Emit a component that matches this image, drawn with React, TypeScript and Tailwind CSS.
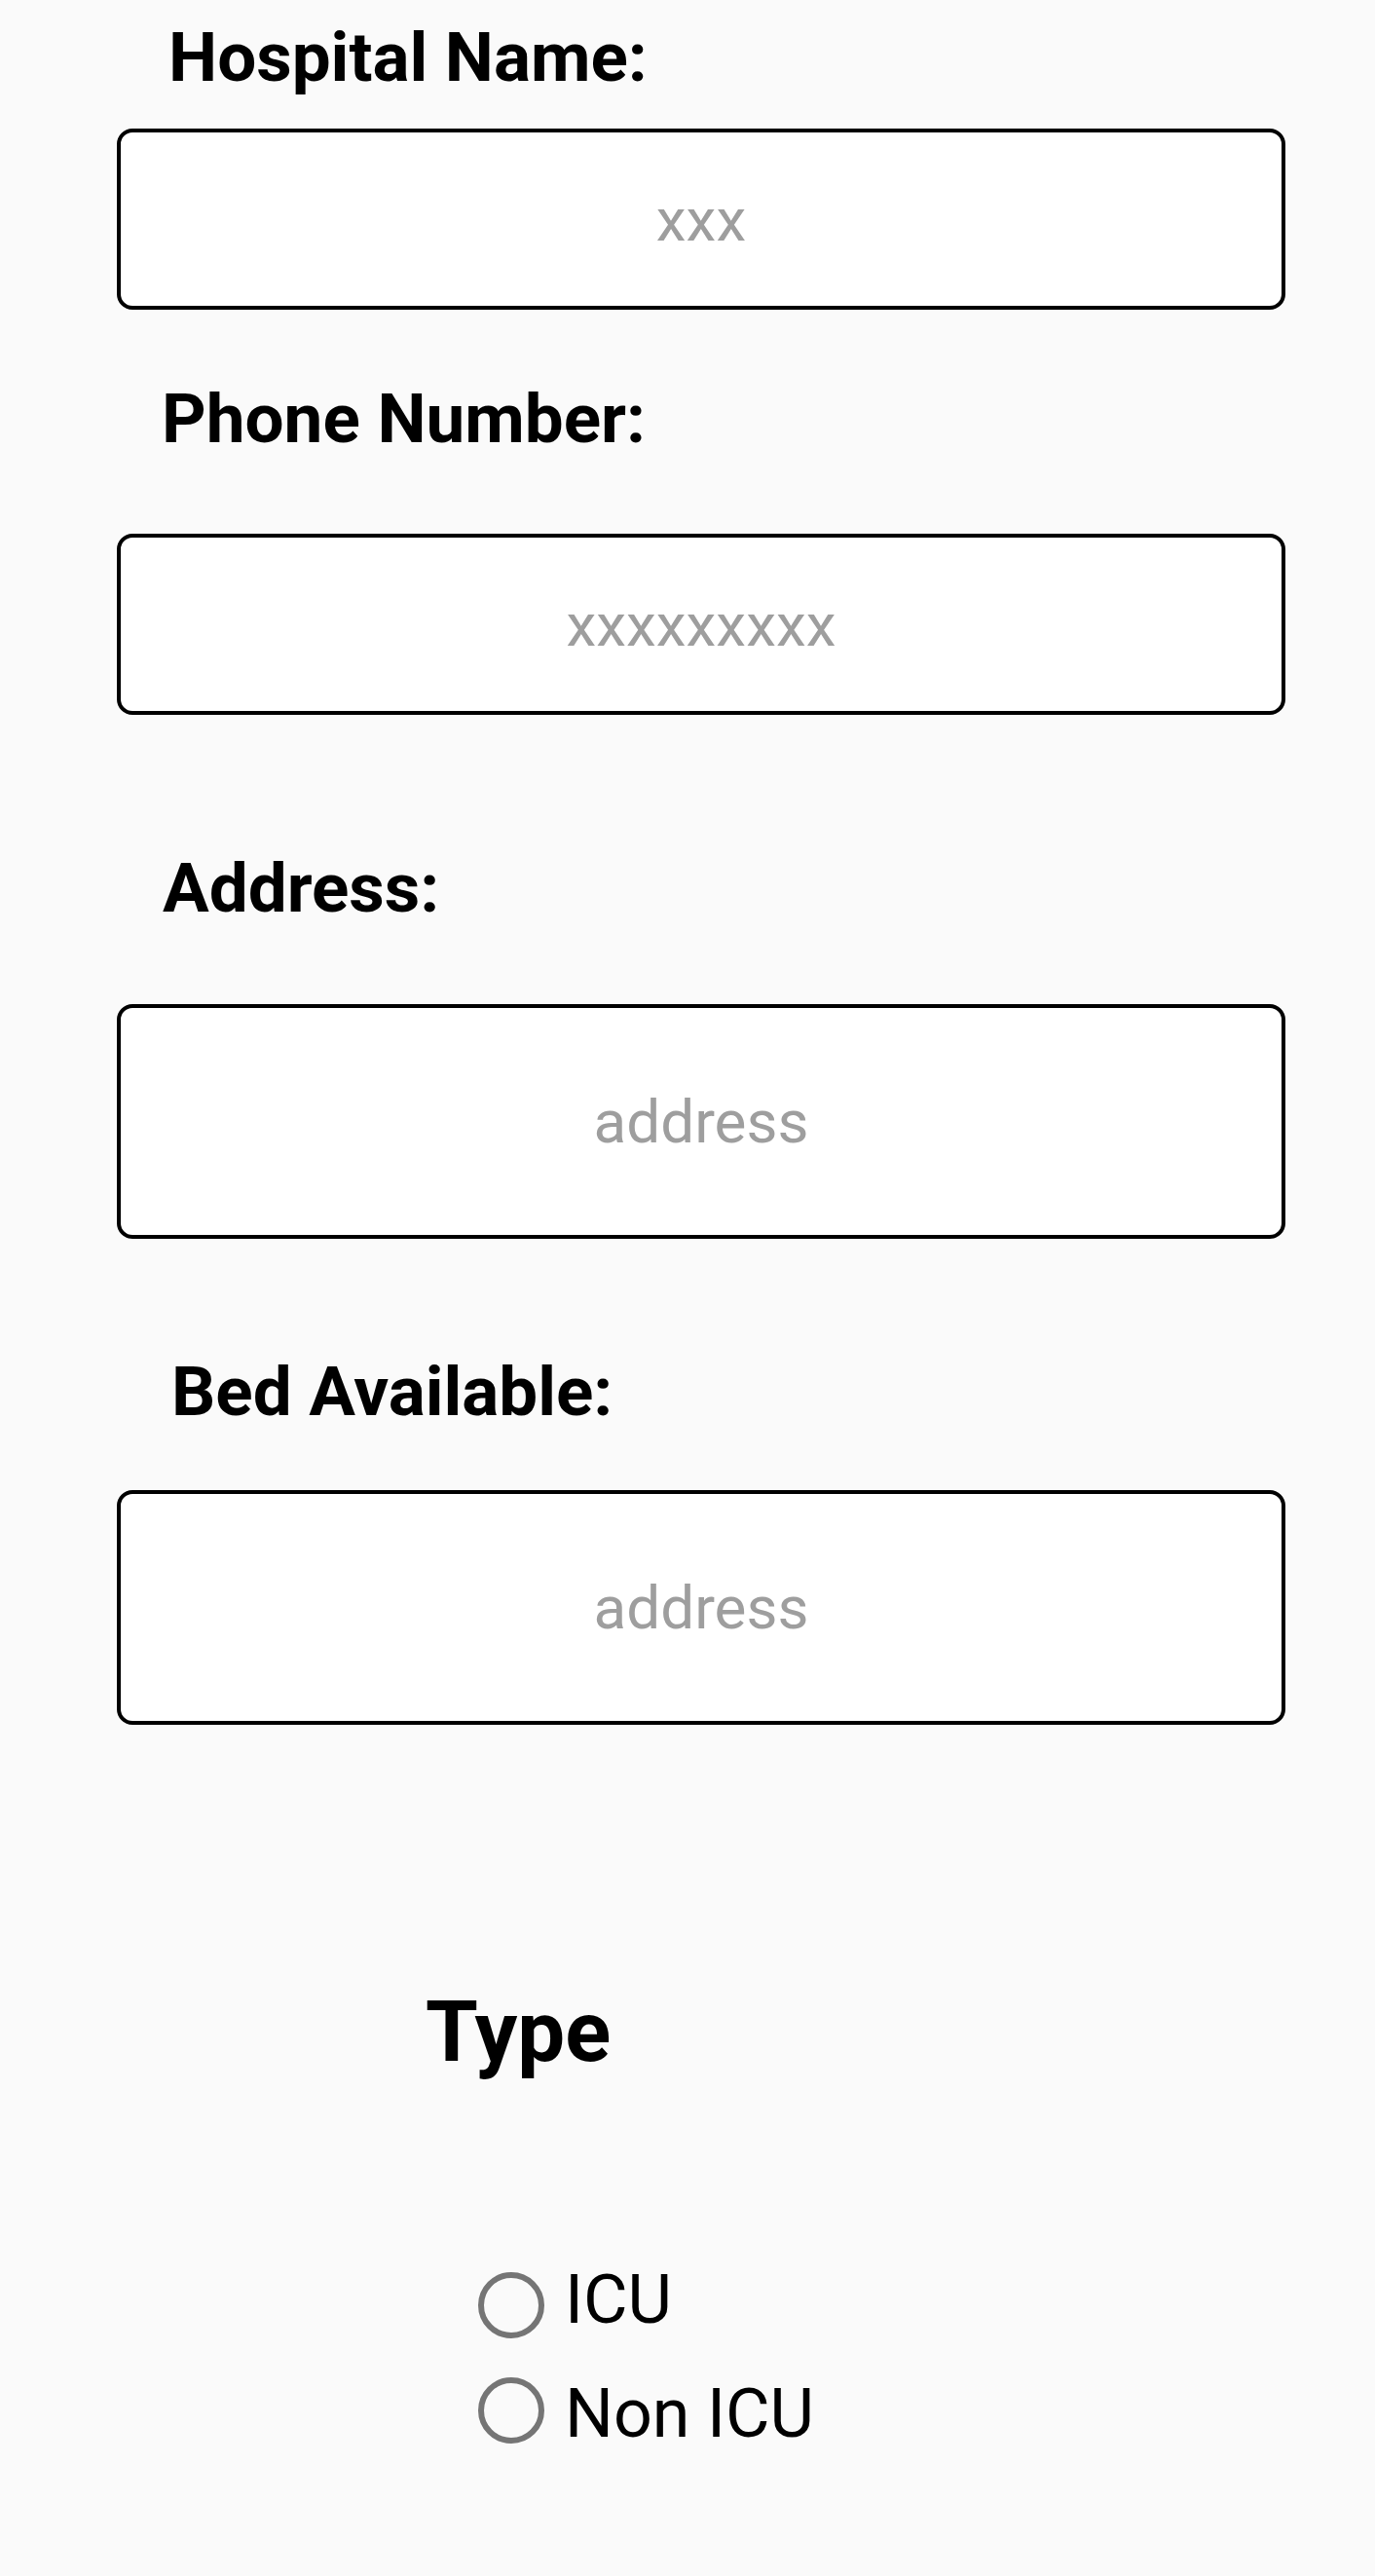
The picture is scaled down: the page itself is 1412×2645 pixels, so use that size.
export default function App() {
  return (
    <main className="min-h-screen bg-[#fafafa] font-['Roboto',sans-serif] text-black">
      <div className="flex flex-col pt-[19px]">

        {/* Hospital name */}
        <label className="ml-[173px] text-[71px] leading-[80px] font-bold">
          Hospital Name:
        </label>
        <div className="mt-[33px] ml-[120px] flex h-[186px] w-[1200px] items-center rounded-[16px] border-4 border-black bg-white">
          <input
            placeholder="xxx"
            className="w-full bg-transparent text-center text-[62px] outline-none placeholder:text-[#9e9e9e]"
          />
        </div>

        {/* Phone */}
        <label className="mt-[72px] ml-[166px] text-[71px] leading-[80px] font-bold">
          Phone Number:
        </label>
        <div className="mt-[78px] ml-[120px] flex h-[186px] w-[1200px] items-center rounded-[16px] border-4 border-black bg-white">
          <input
            placeholder="xxxxxxxxx"
            className="w-full bg-transparent text-center text-[62px] outline-none placeholder:text-[#9e9e9e]"
          />
        </div>

        {/* Address */}
        <label className="mt-[138px] ml-[167px] text-[71px] leading-[80px] font-bold">
          Address:
        </label>
        <div className="mt-[79px] ml-[120px] flex h-[241px] w-[1200px] items-center rounded-[16px] border-4 border-black bg-white">
          <input
            placeholder="address"
            className="w-full bg-transparent text-center text-[62px] outline-none placeholder:text-[#9e9e9e]"
          />
        </div>

        {/* Beds */}
        <label className="mt-[117px] ml-[176px] text-[71px] leading-[80px] font-bold">
          Bed Available:
        </label>
        <div className="mt-[61px] ml-[120px] flex h-[241px] w-[1200px] items-center rounded-[16px] border-4 border-black bg-white">
          <input
            placeholder="address"
            className="w-full bg-transparent text-center text-[62px] outline-none placeholder:text-[#9e9e9e]"
          />
        </div>

        {/* Type */}
        <h2 className="mt-[265px] ml-[437px] text-[87px] leading-[100px] font-bold">
          Type
        </h2>

        <div className="mt-[197px] ml-[491px] flex flex-col gap-[40px]">
          <label className="flex h-[68px] items-center gap-[21px]">
            <span className="h-[68px] w-[68px] shrink-0 rounded-full border-[6px] border-[#757575]" />
            <span className="pb-3 text-[70px] leading-[68px]">ICU</span>
          </label>
          <label className="flex h-[68px] items-center gap-[21px]">
            <span className="h-[68px] w-[68px] shrink-0 rounded-full border-[6px] border-[#757575]" />
            <span className="pt-[6px] text-[70px] leading-[68px]">Non ICU</span>
          </label>
        </div>

      </div>
    </main>
  );
}
